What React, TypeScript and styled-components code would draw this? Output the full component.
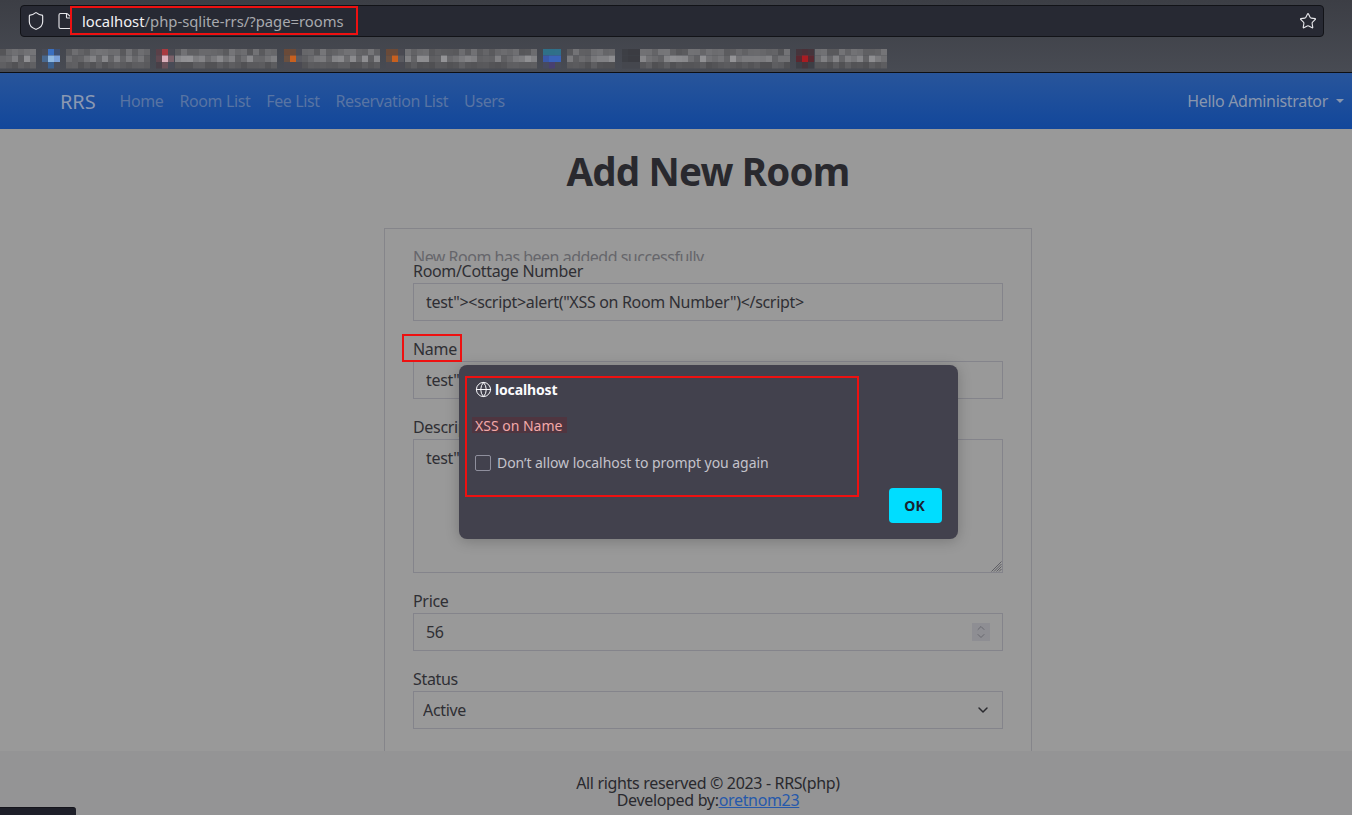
import React from 'react'
import styled, { createGlobalStyle } from 'styled-components'
import { ChevronDown, ChevronUp, File, Globe, Shield, Star } from 'lucide-react'

const Global = createGlobalStyle`
  * { box-sizing: border-box; }
  html, body { margin: 0; height: 100%; }
  body {
    background: #999999;
    color: #2a2a2f;
    font-family: "Noto Sans", "Liberation Sans", sans-serif;
    font-size: 16px;
    overflow: hidden;
  }
`

const Page = styled.div`
  position: relative;
  width: 1352px;
  height: 815px;
  display: flex;
  flex-direction: column;
  overflow: hidden;
`

const BrowserChrome = styled.header`
  height: 73px;
  flex: none;
  background: linear-gradient(#3c3e45, #484b53);
  border-bottom: 1px solid #0e0f12;
`

const Toolbar = styled.div`
  height: 38px;
  padding: 5px 28px 0 20px;
`

const UrlBar = styled.div`
  height: 32px;
  display: flex;
  align-items: center;
  padding: 0 6px 0 5px;
  background: #272933;
  border: 1px solid #121318;
  border-radius: 4px;
  color: #e6e6ea;
`

const PageIcon = styled.span`
  display: flex;
  margin-left: 10px;
`

const UrlText = styled.div`
  margin-left: 8px;
  font-size: 14.8px;
  color: #a8a9ae;
  white-space: nowrap;
  b { font-weight: 400; color: #f2f2f4; }
`

const StarIcon = styled.span`
  display: flex;
  margin-left: auto;
`

const BookmarkBar = styled.svg`
  display: block;
  width: 1352px;
  height: 34px;
`

const Nav = styled.nav`
  height: 56px;
  flex: none;
  display: flex;
  align-items: center;
  padding: 0 8px 0 60px;
  background: linear-gradient(#28559b, #12479b);
  letter-spacing: -0.32px;
`

const Brand = styled.span`
  font-size: 20px;
  letter-spacing: -0.1px;
  color: #8a98b2;
  margin-right: 16px;
`

const NavLink = styled.span`
  font-size: 16px;
  letter-spacing: -0.4px;
  color: #5874a3;
  padding: 0 8px;
`

const UserMenu = styled.span`
  margin-left: auto;
  display: flex;
  align-items: center;
  font-size: 16px;
  color: #8896ae;
  &::after {
    content: '';
    margin-left: 8px;
    border-top: 4.8px solid #8896ae;
    border-left: 4.8px solid transparent;
    border-right: 4.8px solid transparent;
  }
`

const Main = styled.main`
  height: 622px;
  flex: none;
  overflow: hidden;
  display: flex;
  flex-direction: column;
  align-items: center;
  padding-left: 64px;
  letter-spacing: -0.32px;
`

const Title = styled.h1`
  margin: 15px 0 0;
  font-size: 38.5px;
  line-height: 54px;
  font-weight: 700;
  letter-spacing: -0.8px;
  color: #29292e;
`

const Rule = styled.div`
  width: 49px;
  height: 3px;
  margin-top: 12px;
  background: #29292e;
`

const Card = styled.section`
  width: 648px;
  flex: none;
  margin-top: 18px;
  padding: 16px 28px 40px;
  border: 1px solid #85858a;
`

const Notice = styled.div`
  height: 16px;
  margin-bottom: -2px;
  overflow: hidden;
  line-height: 24px;
  letter-spacing: -0.5px;
  color: #66666b;
`

const Field = styled.div`
  margin-bottom: 16px;
`

const Label = styled.label`
  display: block;
  line-height: 24px;
  color: #2f2f34;
`

const controlStyles = `
  display: block;
  width: 100%;
  padding: 6px 12px;
  background: transparent;
  border: 1px solid #84848b;
  border-radius: 0;
  color: #2f2f34;
  font-family: inherit;
  font-size: 16px;
  letter-spacing: -0.32px;
  line-height: 24px;
  outline: none;
`

const Input = styled.input`
  ${controlStyles}
  height: 38px;
`

const TextArea = styled.textarea`
  ${controlStyles}
  height: 134px;
  resize: none;
`

const Relative = styled.div`
  position: relative;
`

const ResizeGrip = styled.svg`
  position: absolute;
  right: 1px;
  bottom: 1px;
  width: 11px;
  height: 11px;
  color: #57575d;
`

const Spinner = styled.span`
  position: absolute;
  top: 10px;
  right: 13px;
  width: 18px;
  height: 18px;
  display: flex;
  flex-direction: column;
  align-items: center;
  justify-content: center;
  background: #8e8e93;
  color: #68686f;
  svg { margin: -2px 0; }
`

const SelectChevron = styled.span`
  position: absolute;
  top: 11px;
  right: 12px;
  display: flex;
  color: #2a2a2f;
  pointer-events: none;
`

const Select = styled.select`
  ${controlStyles}
  height: 38px;
  appearance: none;
  padding-left: 9px;
`

const Footer = styled.footer`
  height: 64px;
  flex: none;
  padding: 24px 0 0 64px;
  background: #949495;
  text-align: center;
  font-size: 16px;
  line-height: 17px;
  letter-spacing: -0.33px;
  color: #29292e;
  a { color: #2659ab; }
`

const Dialog = styled.div`
  position: absolute;
  left: 459px;
  top: 365px;
  width: 499px;
  height: 174px;
  padding: 14px 16px;
  background: #42414d;
  border-radius: 8px;
  box-shadow: 0 2px 14px rgba(0, 0, 0, 0.22);
  color: #fbfbfe;
  font-size: 14px;
`

const DialogTitle = styled.div`
  display: flex;
  align-items: center;
  gap: 3px;
  height: 20px;
  font-weight: 700;
  letter-spacing: -0.15px;
`

const Message = styled.div`
  display: inline-block;
  margin: 18px 0 0 -3px;
  padding: 0 5px 0 3px;
  height: 16px;
  line-height: 18px;
  width: 95px;
  background: #4f3540;
  color: #f3a9a9;
  white-space: nowrap;
`

const CheckRow = styled.div`
  display: flex;
  align-items: center;
  gap: 6px;
  margin-top: 18px;
  letter-spacing: -0.05px;
  color: #c4c3cb;
`

const CheckBox = styled.span`
  width: 16px;
  height: 16px;
  border: 1px solid #8f8f9d;
  border-radius: 2px;
`

const OkButton = styled.button`
  position: absolute;
  right: 16px;
  bottom: 16px;
  width: 53px;
  height: 35px;
  padding: 0 2px 0 0;
  border: 0;
  border-radius: 4px;
  background: #00ddff;
  color: #1a2230;
  font-family: inherit;
  font-size: 14px;
  font-weight: 700;
`

const Annotation = styled.div<{ $x: number; $y: number; $w: number; $h: number }>`
  position: absolute;
  left: ${p => p.$x}px;
  top: ${p => p.$y}px;
  width: ${p => p.$w}px;
  height: ${p => p.$h}px;
  border: 2px solid #ee1111;
  pointer-events: none;
`

const StatusTip = styled.div`
  position: absolute;
  left: 0;
  bottom: 0;
  width: 76px;
  height: 8px;
  background: #1e1f29;
  border-top: 1px solid #15151c;
  border-top-right-radius: 3px;
`

// the blurred out bookmark labels and their favicons, in 6px mosaic blocks
const labels = [[0, 36], [66, 80], [175, 97], [302, 73], [405, 130], [567, 44], [640, 145], [815, 72]]
const favicons: [number, string[]][] = [
  [42, ['#484b56', '#3a6fc0', '#3d4f70', '#48688f', '#90b8e0', '#7aa0d8', '#484b56', '#3a6090', '#484b56']],
  [156, ['#5a4048', '#a83a40', '#4a4a52', '#604850', '#dbb0bc', '#7a6068', '#484048', '#6a5058', '#484b56']],
  [284, ['#6a4a38', '#6a4a38', '#4a4a52', '#6a5040', '#c8601f', '#5a5a60', '#4a4a52', '#4a4a52', '#4a4a52']],
  [386, ['#6a4a38', '#6a4a38', '#4a4a52', '#6a5040', '#c8601f', '#5a5a60', '#4a4a52', '#4a4a52', '#4a4a52']],
  [543, ['#2f7088', '#2f7088', '#30708a', '#3a58a8', '#3a63b8', '#3a63b8', '#474a60', '#484070', '#484b56']],
  [622, ['#3d3f45', '#3b3c42', '#3b3c42', '#3d3f45', '#3b3c42', '#3b3c42', '#45474e', '#45474e', '#45474e']],
  [796, ['#45353c', '#4a3038', '#45353c', '#5a2830', '#a81c22', '#5a2830', '#3d3f46', '#45353c', '#3d3f46']],
]
const rowShade = [0.6, 1, 0.3]

const mosaic = () => {
  const cells: { x: number; y: number; fill: string }[] = []
  labels.forEach(([start, width], n) => {
    for (let x = start; x < start + width; x += 6) {
      rowShade.forEach((shade, r) => {
        const noise = Math.abs(Math.sin(x * 12.9898 + r * 78.233 + n) * 43758.5453) % 1
        const v = Math.round(74 + (18 + noise * 55) * shade)
        cells.push({ x, y: 11 + r * 6.5, fill: `rgb(${v},${v},${v + 3})` })
      })
    }
  })
  favicons.forEach(([x, colours]) => {
    colours.forEach((fill, i) => {
      cells.push({ x: x + (i % 3) * 6, y: 11 + Math.floor(i / 3) * 6.5, fill })
    })
  })
  return cells
}

const cells = mosaic()

export default function App() {
  return (
    <Page>
      <Global />
      <BrowserChrome>
        <Toolbar>
          <UrlBar>
            <Shield size={20} strokeWidth={1.4} />
            <PageIcon><File size={18} strokeWidth={1.5} /></PageIcon>
            <UrlText><b>localhost</b>/php-sqlite-rrs/?page=rooms</UrlText>
            <StarIcon><Star size={18} strokeWidth={1.5} /></StarIcon>
          </UrlBar>
        </Toolbar>
        <BookmarkBar viewBox="0 0 1352 34">
          {cells.map((c, i) => <rect key={i} x={c.x} y={c.y} width={6} height={6.5} fill={c.fill} />)}
        </BookmarkBar>
      </BrowserChrome>
      <Nav>
        <Brand>RRS</Brand>
        <NavLink>Home</NavLink>
        <NavLink>Room List</NavLink>
        <NavLink>Fee List</NavLink>
        <NavLink>Reservation List</NavLink>
        <NavLink>Users</NavLink>
        <UserMenu>Hello Administrator</UserMenu>
      </Nav>
      <Main>
        <Title>Add New Room</Title>
        <Rule />
        <Card>
          <Notice>New Room has been addedd successfully.</Notice>
          <Field>
            <Label>Room/Cottage Number</Label>
            <Input readOnly value={'test"><script>alert("XSS on Room Number")</script>'} />
          </Field>
          <Field>
            <Label>Name</Label>
            <Input readOnly value={'test"><script>alert("XSS on Name")</script>'} />
          </Field>
          <Field>
            <Label>Description</Label>
            <Relative>
              <TextArea readOnly value={'test"><script>alert("XSS on Description")</script>'} />
              <ResizeGrip viewBox="0 0 11 11" fill="none" stroke="currentColor" strokeWidth="0.9">
                <path d="M10.5 0.5 0.5 10.5M10.5 3 3 10.5M10.5 5.5 5.5 10.5M10.5 8 8 10.5" />
              </ResizeGrip>
            </Relative>
          </Field>
          <Field>
            <Label>Price</Label>
            <Relative>
              <Input readOnly value="56" />
              <Spinner><ChevronUp size={12} strokeWidth={2} /><ChevronDown size={12} strokeWidth={2} /></Spinner>
            </Relative>
          </Field>
          <Field>
            <Label>Status</Label>
            <Relative>
              <Select defaultValue="Active"><option>Active</option></Select>
              <SelectChevron><ChevronDown size={16} strokeWidth={2.2} /></SelectChevron>
            </Relative>
          </Field>
        </Card>
      </Main>
      <Footer>
        All rights reserved © 2023 - RRS(php)
        <br />
        Developed by:<a href="#">oretnom23</a>
      </Footer>

      <Dialog>
        <DialogTitle><Globe size={17} strokeWidth={1.4} />localhost</DialogTitle>
        <Message>XSS on Name</Message>
        <CheckRow><CheckBox />Don’t allow localhost to prompt you again</CheckRow>
        <OkButton>OK</OkButton>
      </Dialog>

      <Annotation $x={70} $y={6} $w={288} $h={29} />
      <Annotation $x={402} $y={334} $w={60} $h={28} />
      <Annotation $x={465} $y={376} $w={394} $h={121} />
      <StatusTip />
    </Page>
  )
}
